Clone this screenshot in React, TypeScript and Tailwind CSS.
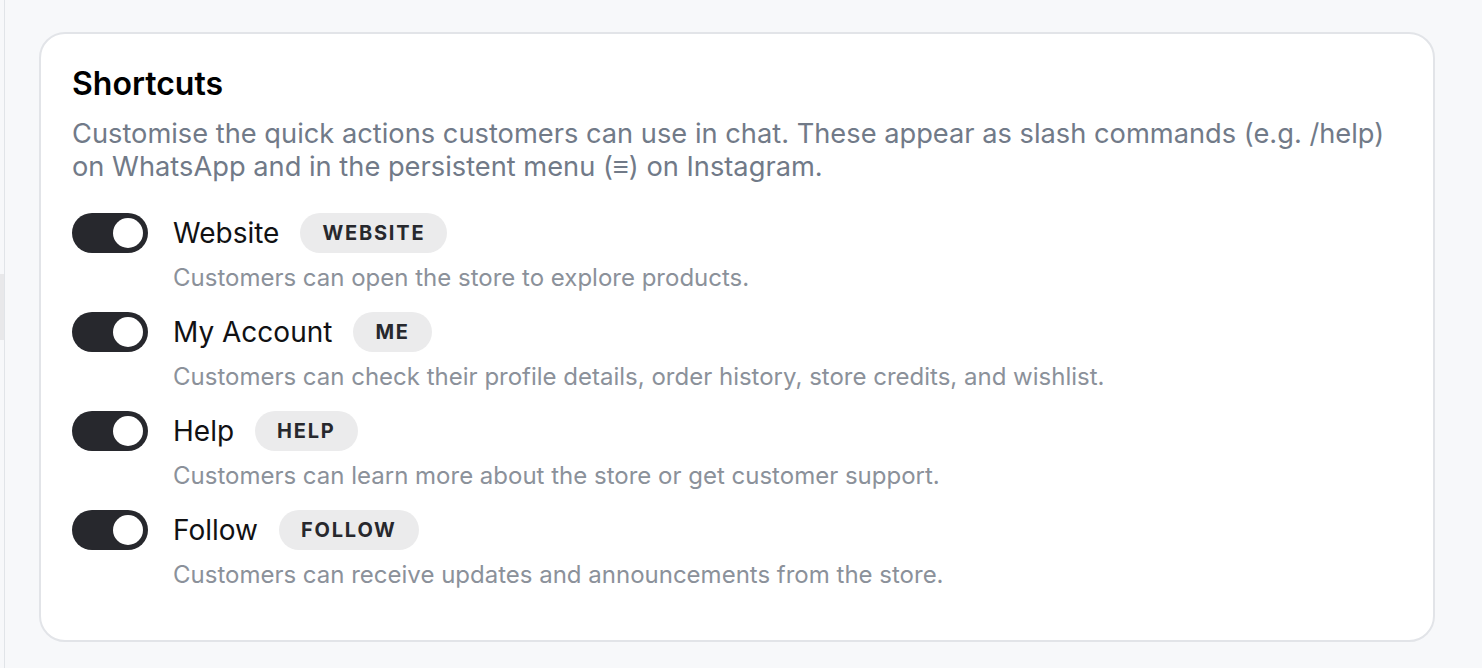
import React, { useState } from "react";

interface Shortcut {
  title: string;
  command: string;
  description: string;
}

const shortcuts: Shortcut[] = [
  {
    title: "Website",
    command: "Website",
    description: "Customers can open the store to explore products.",
  },
  {
    title: "My Account",
    command: "Me",
    description:
      "Customers can check their profile details, order history, store credits, and wishlist.",
  },
  {
    title: "Help",
    command: "Help",
    description: "Customers can learn more about the store or get customer support.",
  },
  {
    title: "Follow",
    command: "Follow",
    description: "Customers can receive updates and announcements from the store.",
  },
];

const Toggle = ({ on, onChange }: { on: boolean; onChange: () => void }) => {
  return (
    <button
      type="button"
      onClick={onChange}
      className={`relative flex h-[40px] w-[76px] shrink-0 items-center rounded-full px-[5px] ${
        on ? "justify-end bg-[#27282d]" : "justify-start bg-[#d4d6db]"
      }`}
    >
      <span className="block h-[30px] w-[30px] rounded-full bg-white" />
    </button>
  );
};

const ShortcutRow = ({ item }: { item: Shortcut }) => {
  const [on, setOn] = useState(true);
  return (
    <div className="flex flex-col">
      <div className="flex items-center">
        <Toggle on={on} onChange={() => setOn(!on)} />
        <span className="ml-[25px] text-[28px] leading-[40px] text-[#111113]">{item.title}</span>
        <span className="ml-[21px] flex h-[40px] items-center rounded-full bg-[#ebebec] px-[22px] text-[20px] font-bold uppercase tracking-[0.09em] text-[#27282d]">
          {item.command}
        </span>
      </div>
      <p className="ml-[101px] mt-[10px] text-[24px] leading-[30px] text-[#8b919a]">{item.description}</p>
    </div>
  );
};

export default function App() {
  return (
    <div className="flex min-h-[668px] bg-[#f7f8fa] font-['Inter',sans-serif]">
      <div className="w-[5px] shrink-0 border-r border-[#e1e4e8]">
        <div className="mt-[274px] h-[66px] w-[4px] bg-[#e8e8ea]" />
      </div>
      <div className="flex-1 pb-[28px] pl-[34px] pr-[47px] pt-[32px]">
        <div className="rounded-[26px] border-2 border-[#e2e4e8] bg-white pb-[50px] pl-[31px] pr-[31px] pt-[31px]">
          <h2 className="text-[32px] font-semibold leading-[38px] text-black">Shortcuts</h2>
          <p className="mt-[14px] text-[27.25px] leading-[33px] text-[#717a88]">
            Customise the quick actions customers can use in chat. These appear as slash commands (e.g. /help)
            on WhatsApp and in the persistent menu (≡) on Instagram.
          </p>
          <div className="mt-[30px] flex flex-col gap-[19px]">
            {shortcuts.map((s) => (
              <ShortcutRow key={s.title} item={s} />
            ))}
          </div>
        </div>
      </div>
    </div>
  );
}
